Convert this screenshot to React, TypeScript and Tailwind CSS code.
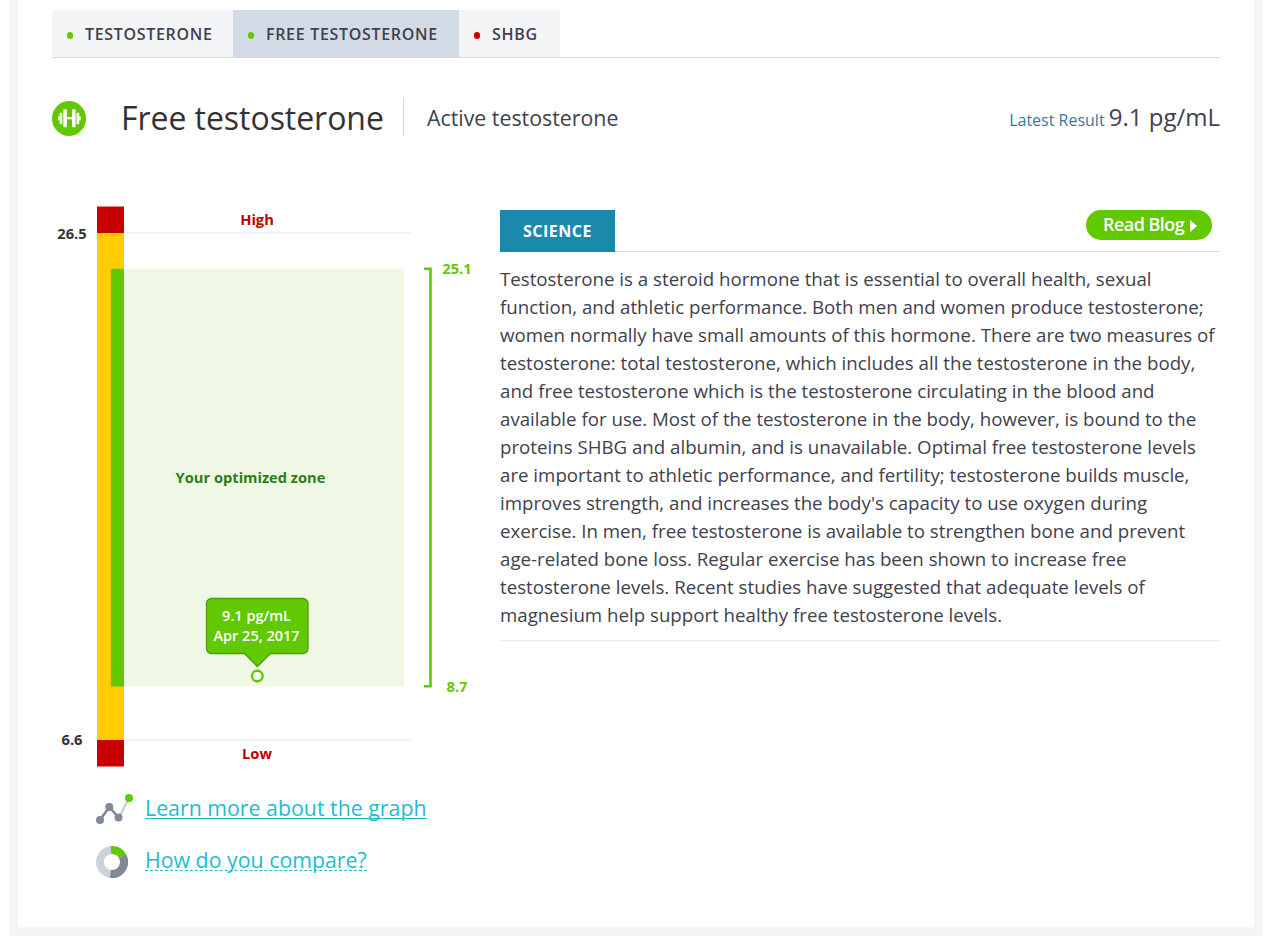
import { useState } from "react";

type Marker = {
  id: string;
  label: string;
  dot: string;
  width: string;
};

const MARKERS: Marker[] = [
  { id: "testosterone", label: "TESTOSTERONE", dot: "bg-[#62c900]", width: "w-[181px]" },
  { id: "free", label: "FREE TESTOSTERONE", dot: "bg-[#62c900]", width: "w-[226px]" },
  { id: "shbg", label: "SHBG", dot: "bg-[#c80000]", width: "w-[101px]" },
];

const SCIENCE_LINES = [
  "Testosterone is a steroid hormone that is essential to overall health, sexual",
  "function, and athletic performance. Both men and women produce testosterone;",
  "women normally have small amounts of this hormone. There are two measures of",
  "testosterone: total testosterone, which includes all the testosterone in the body,",
  "and free testosterone which is the testosterone circulating in the blood and",
  "available for use. Most of the testosterone in the body, however, is bound to the",
  "proteins SHBG and albumin, and is unavailable. Optimal free testosterone levels",
  "are important to athletic performance, and fertility; testosterone builds muscle,",
  "improves strength, and increases the body's capacity to use oxygen during",
  "exercise. In men, free testosterone is available to strengthen bone and prevent",
  "age-related bone loss. Regular exercise has been shown to increase free",
  "testosterone levels. Recent studies have suggested that adequate levels of",
  "magnesium help support healthy free testosterone levels.",
];

function DumbbellIcon() {
  return (
    <svg className="relative top-px h-[35px] w-[34px] shrink-0" viewBox="0 0 34 35">
      <ellipse cx="17" cy="17.5" rx="17" ry="17.5" fill="#62c900" />
      <g fill="#fff">
        <rect x="11.3" y="8.2" width="3.6" height="18" rx="1" />
        <rect x="20" y="8.2" width="3.6" height="18" rx="1" />
        <rect x="7.6" y="11.7" width="2.7" height="11.6" rx="1" />
        <rect x="24.5" y="11.7" width="2.7" height="11.6" rx="1" />
        <rect x="6" y="15.2" width="2" height="4.2" rx="0.8" />
        <rect x="26.8" y="15.2" width="2" height="4.2" rx="0.8" />
        <rect x="14.5" y="16.1" width="6" height="2.2" />
      </g>
    </svg>
  );
}

function GraphIcon() {
  return (
    <svg className="h-[32px] w-[38px] shrink-0" viewBox="0 0 38 32">
      <path d="M23 25.5 33 6" stroke="#cbd3df" strokeWidth="2.6" />
      <path d="M4 28 13.3 15 22.5 25.5" fill="none" stroke="#808998" strokeWidth="2.6" />
      <g fill="#808998">
        <circle cx="4" cy="28" r="4" />
        <circle cx="13.3" cy="15" r="4" />
        <circle cx="22.5" cy="25.5" r="4" />
      </g>
      <circle cx="33" cy="6" r="4" fill="#62c900" />
    </svg>
  );
}

function CompareIcon() {
  return (
    <svg className="relative top-[2px] h-[32px] w-[32px] shrink-0" viewBox="0 0 32 32">
      <circle cx="16" cy="16" r="12" fill="none" stroke="#cbd3df" strokeWidth="8" />
      <path d="M26.4 10A12 12 0 0 1 14.4 27.9" fill="none" stroke="#808998" strokeWidth="8" />
      <path d="M15 4.04A12 12 0 0 1 26.4 10" fill="none" stroke="#62c900" strokeWidth="8" />
    </svg>
  );
}

function RangeChart() {
  return (
    <svg
      className="block h-[575px] w-[438px] font-['Open_Sans',sans-serif]"
      viewBox="52 200 438 575"
    >
      {/* range bar */}
      <rect x="97" y="206.5" width="27" height="27" fill="#c80000" />
      <rect x="97" y="233" width="27" height="507" fill="#ffcc00" />
      <rect x="97" y="740" width="27" height="26.5" fill="#c80000" />
      <rect x="110.8" y="268.8" width="13.2" height="417.7" fill="#62c900" />

      {/* limits */}
      <rect x="124" y="232" width="287" height="2" fill="#f2f2f8" />
      <rect x="124" y="739" width="287" height="2" fill="#f2f2f8" />

      {/* optimized zone */}
      <rect x="124" y="268.8" width="280" height="417.7" fill="#eff8e4" />
      <path d="M424 268.7H430.5V686.3H424" fill="none" stroke="#62c900" strokeWidth="2.6" />

      <g fontSize="14.67" fontWeight="700" textAnchor="middle">
        <text x="72" y="239" fill="#333333">26.5</text>
        <text x="72" y="745" fill="#333333">6.6</text>
        <text x="257" y="225" fill="#c00000">High</text>
        <text x="257" y="759" fill="#c00000">Low</text>
        <text x="457" y="274" fill="#62c900">25.1</text>
        <text x="457" y="692" fill="#62c900">8.7</text>
        <text x="250.5" y="483" fill="#2c7f12">Your optimized zone</text>
      </g>

      {/* result callout */}
      <path
        d="M211.5 598.5H303a5 5 0 0 1 5 5V648.5a5 5 0 0 1-5 5H270.5L257.3 666.5 244.5 653.5H211.5a5 5 0 0 1-5-5V603.5a5 5 0 0 1 5-5Z"
        fill="#62c900"
        stroke="#4b9f06"
        strokeWidth="1.3"
      />
      <g fontSize="14.5" fontWeight="600" textAnchor="middle" fill="#fff">
        <text x="256.5" y="621">9.1 pg/mL</text>
        <text x="256.5" y="641">Apr 25, 2017</text>
      </g>
      <circle cx="257.3" cy="676" r="5.3" fill="#fff" stroke="#62c900" strokeWidth="2.4" />
    </svg>
  );
}

export default function App() {
  const [active, setActive] = useState("free");

  return (
    <main className="h-[946px] bg-white px-[9px] font-['Open_Sans',sans-serif] text-[#41414d]">
      <div className="h-[936px] border-x-[9px] border-b-[9px] border-[#f3f5f7] px-[34px] pt-2.5">
        {/* Tabs */}
        <nav className="flex h-12 border-b border-[#d3dbe6]">
          {MARKERS.map((m) => (
            <button
              key={m.id}
              type="button"
              onClick={() => setActive(m.id)}
              className={[
                "flex h-[47px] items-center pl-[15px] text-[16px] font-semibold tracking-[0.68px] whitespace-nowrap",
                m.width,
                active === m.id ? "bg-[#d3dbe6]" : "bg-[#f3f5f7]",
              ].join(" ")}
            >
              <span className={`mt-[3px] mr-3 h-[7px] w-1.5 shrink-0 rounded-full ${m.dot}`} />
              <span className="pt-px">{m.label}</span>
            </button>
          ))}
        </nav>

        {/* Title */}
        <header className="mt-10 flex h-[38px] items-center">
          <DumbbellIcon />
          <h1 className="ml-[35px] w-[282px] pt-0.5 text-[32px] leading-[38px] tracking-[-0.05px] whitespace-nowrap text-[#333333]">
            Free testosterone
          </h1>
          <div className="h-full border-l border-[#d3dbe6] pt-px pl-[23px] text-[21.33px] leading-[38px]">
            Active testosterone
          </div>
          <div className="ml-auto whitespace-nowrap">
            <span className="text-[16px] text-[#3279a0]">Latest Result </span>
            <span className="text-[24px] leading-[38px]">9.1 pg/mL</span>
          </div>
        </header>

        <div className="mt-16 flex">
          <section className="w-[448px] shrink-0">
            <RangeChart />
            <div className="mt-[17px] ml-11 flex flex-col gap-[20px] text-[21.33px] leading-[32px] text-[#22bcd2]">
              <div className="flex h-8 items-center">
                <GraphIcon />
                <a href="#graph" className="ml-[11px] border-b border-[#22bcd2] leading-[21px] whitespace-nowrap">
                  Learn more about the graph
                </a>
              </div>
              <div className="flex h-8 items-center">
                <CompareIcon />
                <a href="#compare" className="ml-[17px] border-b border-dashed border-[#22bcd2] leading-[21px] whitespace-nowrap">
                  How do you compare?
                </a>
              </div>
            </div>
          </section>

          <section className="mt-[10px] h-[431px] w-[720px] border-b border-[#e8ebef]">
            <div className="flex h-[42px] justify-between border-b border-[#d3dbe6]">
              <h2 className="h-[42px] w-[115px] bg-[#1b89ab] text-center text-[16px] leading-[42px] font-bold tracking-[0.5px] text-white">
                SCIENCE
              </h2>
              <button
                type="button"
                className="mr-2 flex h-[30px] w-[126px] items-center rounded-full bg-[#62c900] pb-px pl-[17px] text-[18px] font-semibold tracking-[-0.55px] whitespace-nowrap text-white"
              >
                Read Blog
                <svg className="mt-[3px] ml-[6px] h-3 w-[7px]" viewBox="0 0 7 12">
                  <path d="M0 0 7 6 0 12Z" fill="#fff" />
                </svg>
              </button>
            </div>
            <p className="pt-[13px] text-[18.7px] leading-[28px]">
              {SCIENCE_LINES.map((line) => (
                <span key={line} className="block whitespace-nowrap">
                  {line}
                </span>
              ))}
            </p>
          </section>
        </div>
      </div>
    </main>
  );
}
